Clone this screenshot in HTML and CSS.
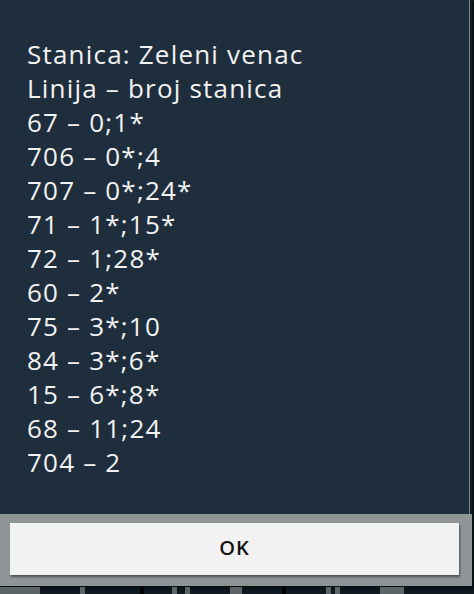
FILE: index.html
```html
<!DOCTYPE html>
<html lang="sr">
<head>
    <meta charset="UTF-8">
    <meta name="viewport" content="width=device-width, initial-scale=1.0">
    <title>Stanica</title>
    <link rel="stylesheet" href="styles.css">
</head>
<body>

<div class="screen">
    <div class="dialog">
        <div class="message">
            <div>Stanica: Zeleni venac</div>
            <div>Linija – broj stanica</div>
            <div>67 – 0;1*</div>
            <div>706 – 0*;4</div>
            <div>707 – 0*;24*</div>
            <div>71 – 1*;15*</div>
            <div>72 – 1;28*</div>
            <div>60 – 2*</div>
            <div>75 – 3*;10</div>
            <div>84 – 3*;6*</div>
            <div>15 – 6*;8*</div>
            <div>68 – 11;24</div>
            <div>704 – 2</div>
        </div>
        <div class="button-bar">
            <button class="ok">OK</button>
        </div>
    </div>

    <div class="behind">
        <span class="bit w40"></span>
        <span class="bit w8 ml40"></span>
        <span class="gap-dark ml50"></span>
        <span class="bit w8 ml30"></span>
        <span class="bit w8 ml6"></span>
        <span class="bit w14 ml40"></span>
        <span class="gap-dark ml40"></span>
        <span class="bit w8 ml40"></span>
        <span class="bit w8 ml4"></span>
        <span class="bit w24 ml40"></span>
    </div>
</div>

</body>
</html>
```

FILE: styles.css
```css
body {
    margin: 0;
    background-color: #0f1a23;
    font-family: "Open Sans", "DejaVu Sans", sans-serif;
    overflow: hidden;
}
.screen {
    width: 474px;
    height: 594px;
    display: flex;
    flex-direction: column;
}
.dialog {
    width: 472px;
    display: flex;
    flex-direction: column;
    box-shadow: 2px 2px 3px rgba(0, 0, 0, 0.6);
}
.message {
    background-color: #1f2e3d;
    color: #f2f2f2;
    font-size: 26px;
    line-height: 34px;
    padding: 37px 0 35px 27px;
    width: 442px;
    border-right: 1px solid #7a848c;
    letter-spacing: 1.2px;
}
.button-bar {
    background-color: #8f9497;
    padding: 9px 13px 11px 10px;
}
.ok {
    display: block;
    width: 100%;
    height: 52px;
    border: none;
    background-color: #f2f2f2;
    box-shadow: 1px 2px 2px rgba(0, 0, 0, 0.45);
    font-family: "Open Sans", "DejaVu Sans", sans-serif;
    font-size: 20px;
    font-weight: 600;
    letter-spacing: 1px;
    color: #111111;
    padding: 0 0 3px 0;
}
.behind {
    flex: 1;
    display: flex;
    align-items: stretch;
    padding-top: 1px;
}
.bit {
    background-color: #5d6468;
}
.gap-dark {
    width: 4px;
    background-color: #000000;
}
.w8 { width: 5px; }
.w14 { width: 12px; }
.w24 { width: 24px; }
.w40 { width: 40px; }
.ml4 { margin-left: 4px; }
.ml6 { margin-left: 8px; }
.ml30 { margin-left: 28px; }
.ml40 { margin-left: 40px; }
.ml50 { margin-left: 55px; }
```
